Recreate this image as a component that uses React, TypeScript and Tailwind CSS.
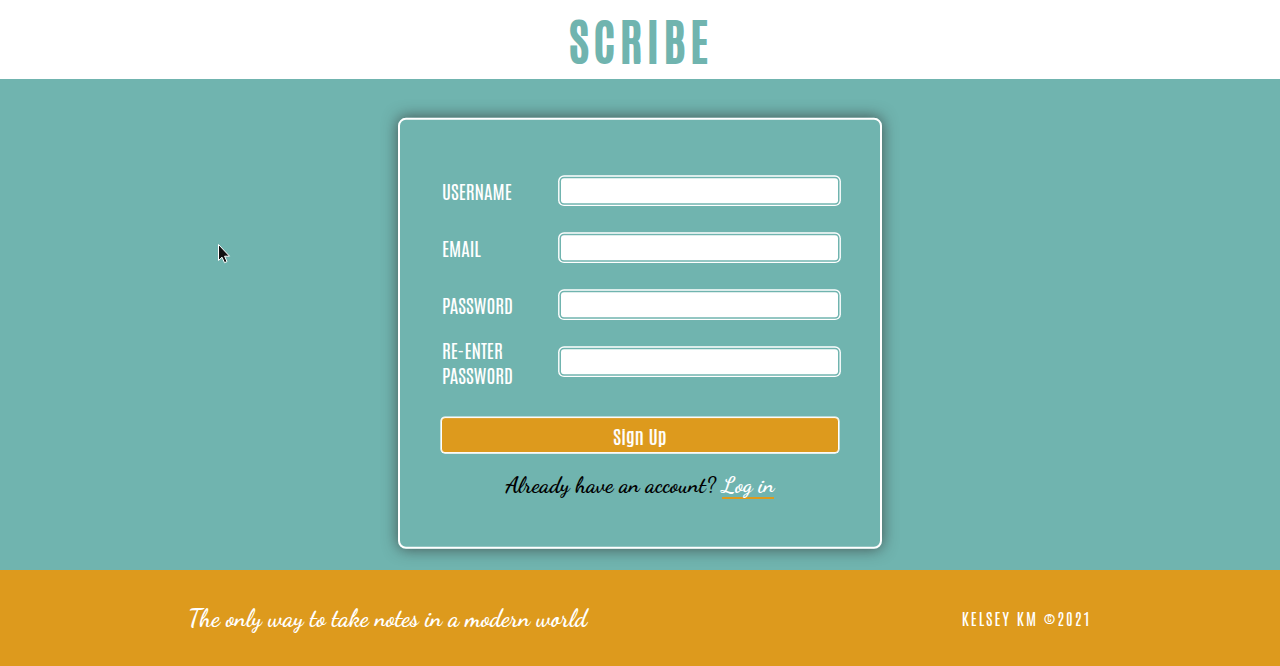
import type { ReactNode } from "react";

const condensed = "font-['Antonio','Roboto',sans-serif]";
const script = "font-['Dancing_Script','Liberation_Serif',cursive] font-bold";

function Field({ id, type = "text", children }: { id: string; type?: string; children: ReactNode }) {
  return (
    <div className="flex h-[57px] items-center">
      <label
        htmlFor={id}
        className={`${condensed} w-[119px] shrink-0 pb-[2px] text-[19.2px] leading-[25px] whitespace-nowrap text-white`}
      >
        {children}
      </label>
      <input
        id={id}
        type={type}
        className="h-[25px] w-[277px] shrink-0 translate-y-[-0.6px] rounded-[3px] bg-white shadow-[0_0_0_1.5px_#70b4af,0_0_0_2.9px_#fff] outline-none"
      />
    </div>
  );
}

export default function App() {
  return (
    <div className="relative flex h-[666px] w-full flex-col overflow-hidden bg-[#70b4af]">
      <header className="flex h-[79px] shrink-0 items-center justify-center bg-white">
        <h1 className={`${condensed} pl-[2px] text-[48px] leading-[79px] font-normal tracking-[5px] text-[#70b4af] [-webkit-text-stroke:2px_#70b4af]`}>
          SCRIBE
        </h1>
      </header>

      <main className="flex flex-1 justify-center pt-[39px]">
        <form className="h-[431px] w-[484px] translate-y-[-0.2px] rounded-[8px] border-2 border-white px-[42px] pt-[43px] shadow-[0_0_15px_rgba(51,51,51,0.75)]">
          <Field id="username">USERNAME</Field>
          <Field id="email">EMAIL</Field>
          <Field id="password" type="password">PASSWORD</Field>
          <Field id="confirm" type="password">
            RE-ENTER
            <br />
            PASSWORD
          </Field>
          <button
            type="button"
            className={`${condensed} mt-[26px] -ml-[1px] flex h-[36px] w-[398px] translate-y-[0.3px] items-center justify-center rounded-[4px] border border-white bg-[#dd9a1d] pt-[3px] text-[19.2px] font-normal tracking-[0.1px] text-white shadow-[0_0_0_0.6px_#fff] [-webkit-text-stroke:0.2px_#fff]`}
          >
            Sign Up
          </button>
          <p className={`${script} mt-[17px] text-center text-[22.4px] leading-[30px] whitespace-nowrap text-black`}>
            Already have an account?{" "}
            <a href="#login" className="inline-block h-[29px] translate-y-[0.2px] border-b-2 border-[#dd9a1d] text-white">
              Log in
            </a>
          </p>
        </form>
      </main>

      <footer className="flex h-[96px] shrink-0 items-center justify-between bg-[#dd9a1d] pr-[188px] pl-[188px] text-white">
        <p className={`${script} pt-[2px] text-[24px] whitespace-nowrap`}>The only way to take notes in a modern world</p>
        <p className={`${condensed} text-[16px] tracking-[2px] whitespace-nowrap`}>KELSEY KM ©2021</p>
      </footer>

      <svg className="absolute top-[243px] left-[217px] h-[22px] w-[14px]" viewBox="0 0 14 22">
        <path
          d="M1.5 1.5V17.5L5 14.2L7.5 19.7L10 18.6L7.6 13.2H12.5Z"
          fill="#111"
          stroke="#fff"
          strokeWidth="1"
        />
      </svg>
    </div>
  );
}
